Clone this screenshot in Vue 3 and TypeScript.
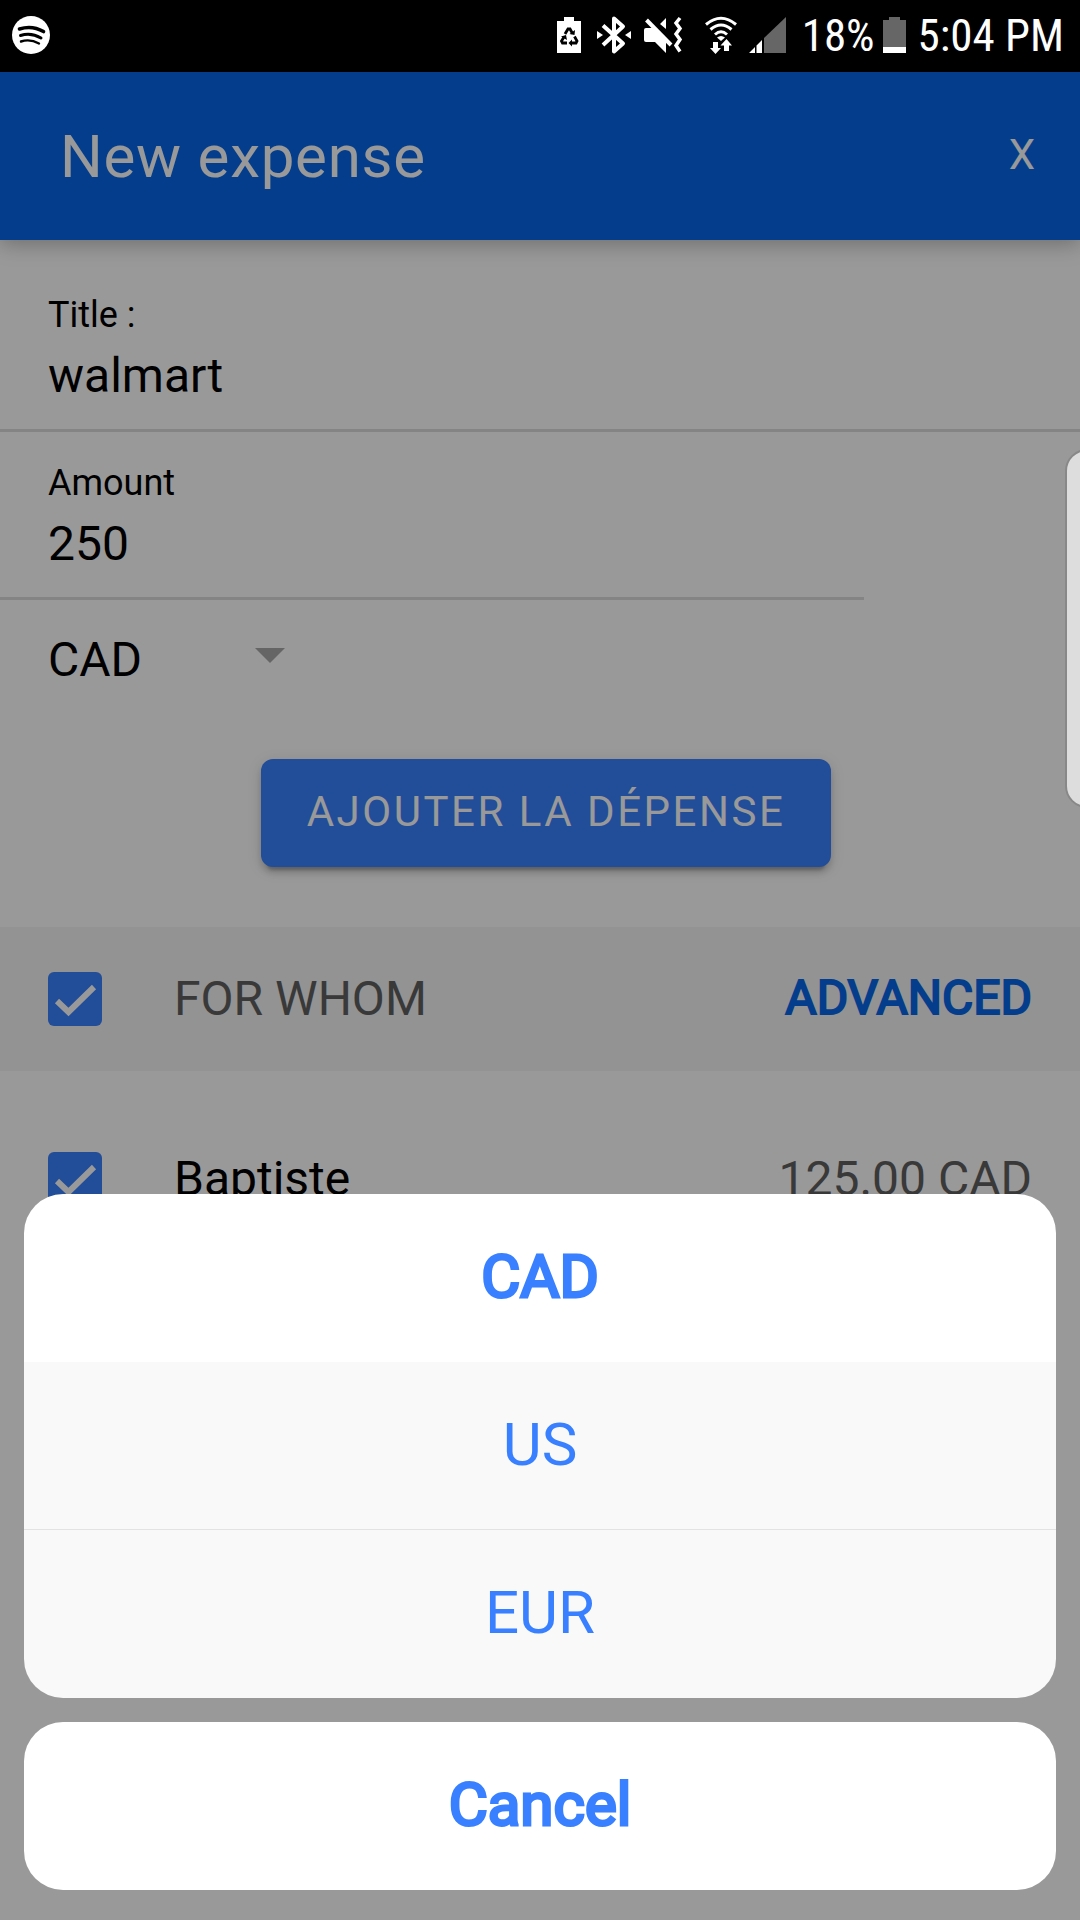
<script setup lang="ts">
import { ref } from 'vue'

interface Currency {
  code: string
  selected: boolean
}

interface Person {
  id: string
  name: string
  share: string
  included: boolean
}

const title = ref('walmart')
const amount = ref('250')
const currency = ref('CAD')
const everyone = ref(true)

const currencies: Currency[] = [
  { code: 'CAD', selected: true },
  { code: 'US', selected: false },
  { code: 'EUR', selected: false },
]

const people = ref<Person[]>([
  { id: 'baptiste', name: 'Baptiste', share: '125.00 CAD', included: true },
])
</script>

<template>
  <div class="phone">
    <div class="status">
      <svg class="glyph" width="38" height="40" viewBox="0 0 38 40" aria-hidden="true">
        <circle cx="19" cy="19" r="19" fill="#fff" />
        <g fill="none" stroke="#000" stroke-linecap="round">
          <path d="M7.500 13Q20 9 31.500 15.500" stroke-width="3.600" />
          <path d="M8.500 19.500Q19 16 29 22" stroke-width="3" />
          <path d="M9 25.500Q18 22.500 27 27.500" stroke-width="2.400" />
        </g>
      </svg>
      <div class="status-right">
        <svg class="glyph battery-saver" width="24" height="40" viewBox="0 0 24 40" aria-hidden="true">
          <path d="M7 1h10v4h7v32H0V5h7z" fill="#fff" />
          <g fill="none" stroke="#000" stroke-width="2.800">
            <path d="M8 18l3-5h2l2.500 4.500" />
            <path d="M17.500 20.500l2.500 4.500-1 2h-4.500" />
            <path d="M10 27H5.500L4.500 25l2.500-4" />
          </g>
          <path d="M12.500 18l5 1 .5-5zM15 23.500v7l-3.500-3.500zM4 20.500l5-1.500 1 5z" fill="#000" />
        </svg>
        <svg class="glyph bluetooth" width="34" height="40" viewBox="0 0 34 40" aria-hidden="true">
          <path d="M6 9.500L26 27.500 17 35.500V2.500l9 8L6 29" fill="none" stroke="#fff" stroke-width="4" stroke-linejoin="round" />
          <path d="M0 15l6 4-6 4zM34 15l-6 4 6 4z" fill="#fff" />
        </svg>
        <svg class="glyph mute" width="40" height="40" viewBox="0 0 40 40" aria-hidden="true">
          <path d="M0 14q0-2 2-2h7L22 25v12L11 26H2q-2 0-2-2zM22 2v11l-6-5z" fill="#fff" />
          <path d="M2.500 4L27 29" fill="none" stroke="#fff" stroke-width="4" />
          <path d="M36 2l-4 5 4 5.500-4 5.500 4 5.500-4 6 4 6" fill="none" stroke="#fff" stroke-width="3.500" />
        </svg>
        <svg class="glyph wifi" width="32" height="40" viewBox="0 0 32 40" aria-hidden="true">
          <g fill="none" stroke="#fff" stroke-width="3">
            <path d="M1 8.500Q16-4 31 8.500" />
            <path d="M5.500 13.500Q16 4.500 26.500 13.500" />
            <path d="M10 18.500Q16 13 22 18.500" />
          </g>
          <path d="M12 21.500q4-3 8 0l-4 3.500z" fill="#fff" />
          <path d="M8 26h5v6h3l-5.500 6L5 32h3zM19 35v-5.500h-3.500L21.500 23l5.500 6.500h-3V35z" fill="#fff" />
        </svg>
        <svg class="glyph signal" width="37" height="40" viewBox="0 0 37 40" aria-hidden="true">
          <path d="M37 1v36H15V22z" fill="#666" />
          <path d="M0 37l6-6v6zM7.500 37V29.500l5.500-5.500v13z" fill="#fff" />
        </svg>
        <span class="status-text">18%</span>
        <svg class="glyph charge" width="23" height="40" viewBox="0 0 23 40" aria-hidden="true">
          <path d="M6 1h11v3h6v27H0V4h6z" fill="#666" />
          <path d="M0 31h23v6H0z" fill="#fff" />
        </svg>
        <span class="status-text">5:04 PM</span>
      </div>
    </div>

    <div class="screen">
      <header class="toolbar">
        <h1>New expense</h1>
        <button type="button" class="close">X</button>
      </header>

      <main>
        <form class="form" @submit.prevent>
          <div class="field">
            <label for="title">Title :</label>
            <input id="title" v-model="title" type="text" />
          </div>
          <div class="field amount">
            <label for="amount">Amount</label>
            <input id="amount" v-model="amount" type="text" inputmode="decimal" />
          </div>
          <div class="currency">
            <select v-model="currency" aria-label="Currency">
              <option v-for="c in currencies" :key="c.code" :value="c.code">{{ c.code }}</option>
            </select>
            <span class="caret" aria-hidden="true"></span>
          </div>
          <button type="submit" class="submit">AJOUTER LA DÉPENSE</button>
        </form>

        <div class="row group">
          <span class="tick">
            <input id="everyone" v-model="everyone" type="checkbox" />
            <svg v-if="everyone" viewBox="0 0 54 54" aria-hidden="true"><path d="M9 29l11.500 11L46 15" /></svg>
          </span>
          <label for="everyone">FOR WHOM</label>
          <a href="#" class="advanced">ADVANCED</a>
        </div>

        <div class="people">
          <div v-for="p in people" :key="p.id" class="row">
            <span class="tick">
              <input :id="p.id" v-model="p.included" type="checkbox" />
              <svg v-if="p.included" viewBox="0 0 54 54" aria-hidden="true"><path d="M9 29l11.500 11L46 15" /></svg>
            </span>
            <label :for="p.id">{{ p.name }}</label>
            <span class="share">{{ p.share }}</span>
          </div>
        </div>
      </main>

      <div class="overlay">
        <div class="sheet" role="dialog" aria-label="Currency">
          <div class="options">
            <button
              v-for="c in currencies"
              :key="c.code"
              type="button"
              :class="{ selected: c.selected }"
            >{{ c.code }}</button>
          </div>
          <button type="button" class="cancel">Cancel</button>
        </div>
      </div>
      <div class="edge-handle"></div>
    </div>
  </div>
</template>

<style>
body {
  margin: 0;
}
</style>

<style scoped>
.phone {
  display: flex;
  flex-direction: column;
  min-height: 100vh;
  font-family: Roboto, "Liberation Sans", sans-serif;
  font-size: 48px;
  line-height: 56px;
  color: #000;
  background: #fff;
}

.phone * {
  box-sizing: border-box;
}

button,
input,
select {
  margin: 0;
  padding: 0;
  border: 0;
  outline: 0;
  font: inherit;
  color: inherit;
  background: none;
}

/* Status bar */
.status {
  display: flex;
  align-items: center;
  justify-content: space-between;
  height: 72px;
  padding: 0 16px 0 12px;
  background: #000;
  color: #fff;
}

.status-right {
  display: flex;
  align-items: center;
}

.glyph {
  flex: none;
  display: block;
}

.battery-saver {
  margin-right: 16px;
}

.bluetooth {
  margin-right: 13px;
}

.mute {
  margin-right: 21px;
}

.wifi {
  margin-right: 12px;
}

.signal {
  margin-right: 16px;
}

.charge {
  margin: 0 12px 0 8px;
}

.status-text {
  font-family: "Roboto Condensed", "Liberation Sans Narrow", Roboto, sans-serif;
  font-size: 45px;
  white-space: nowrap;
}

/* Page */
.screen {
  position: relative;
  display: flex;
  flex-direction: column;
  flex: 1;
  overflow: hidden;
}

.toolbar {
  position: relative;
  display: flex;
  align-items: center;
  justify-content: space-between;
  height: 168px;
  padding: 0 45px 0 60px;
  background: #0767e8;
  color: #fff;
  box-shadow: 0 4px 20px rgba(0, 0, 0, 0.28);
}

.toolbar h1 {
  margin: 0;
  padding-top: 2px;
  font-size: 60px;
  font-weight: 400;
  line-height: 70px;
  letter-spacing: 0.0125em;
}

.close {
  font-size: 42px;
  padding-bottom: 2px;
}

.form {
  display: flex;
  flex-direction: column;
  padding: 24px 0 60px;
}

.field {
  display: flex;
  flex-direction: column;
  gap: 12px;
  padding: 30px 48px 25px;
  border-bottom: 3px solid #dcdcdc;
}

.field label {
  font-size: 36px;
  line-height: 42px;
}

.field input {
  width: 100%;
  height: 56px;
}

.amount {
  width: 80%;
}

.currency {
  position: relative;
  align-self: flex-start;
  width: 285px;
  padding: 32px 0 32px 48px;
}

.currency select {
  display: block;
  width: 100%;
  height: 56px;
  appearance: none;
}

.caret {
  position: absolute;
  right: 0;
  top: 48px;
  border: 15px solid transparent;
  border-top-color: #a9a9a9;
  border-bottom: 0;
  pointer-events: none;
}

.submit {
  align-self: center;
  height: 108px;
  margin: 39px 0 0 12px;
  padding: 0 46px 2px;
  border-radius: 12px;
  background: #3880ff;
  color: #fff;
  font-size: 42px;
  letter-spacing: 0.06em;
  white-space: nowrap;
  box-shadow: 0 9px 3px -6px rgba(0, 0, 0, 0.2), 0 6px 6px 0 rgba(0, 0, 0, 0.14), 0 3px 15px 0 rgba(0, 0, 0, 0.12);
}

.row {
  display: flex;
  align-items: center;
  height: 144px;
  padding: 0 48px;
}

.group {
  background: #f5f5f5;
  color: #606060;
}

.people {
  padding-top: 36px;
}

.tick {
  position: relative;
  flex: none;
  width: 54px;
  height: 54px;
  margin-right: 72px;
}

.tick input {
  display: block;
  width: 54px;
  height: 54px;
  border-radius: 6px;
  background: #ddd;
  appearance: none;
}

.tick input:checked {
  background: #3880ff;
}

.tick svg {
  position: absolute;
  inset: 0;
  fill: none;
  stroke: #fff;
  stroke-width: 6px;
  pointer-events: none;
}

.row label {
  flex: 1;
}

.advanced {
  padding-bottom: 2px;
  color: #0767e8;
  text-decoration: none;
  -webkit-text-stroke: 2px currentColor;
}

.share {
  color: #606060;
}

/* Action sheet */
.overlay {
  position: absolute;
  inset: 0;
  display: flex;
  flex-direction: column;
  justify-content: flex-end;
  padding: 0 24px 30px;
  background: rgba(0, 0, 0, 0.4);
}

.sheet {
  display: flex;
  flex-direction: column;
  gap: 24px;
  color: #3880ff;
  font-size: 60px;
}

.options {
  display: flex;
  flex-direction: column;
  overflow: hidden;
  border-radius: 39px;
}

.sheet button {
  height: 168px;
  padding-bottom: 2px;
  background: #f9f9f9;
}

.options button + button:not(:last-child) {
  border-bottom: 1px solid #e3e3e3;
}

.sheet .selected,
.sheet .cancel {
  background: #fff;
  -webkit-text-stroke: 3px currentColor;
}

.sheet .cancel {
  border-radius: 39px;
}

.edge-handle {
  position: absolute;
  top: 377px;
  right: -10px;
  width: 25px;
  height: 359px;
  border: 2px solid #888;
  border-radius: 22px 0 0 22px;
  background: #ddd;
}
</style>
